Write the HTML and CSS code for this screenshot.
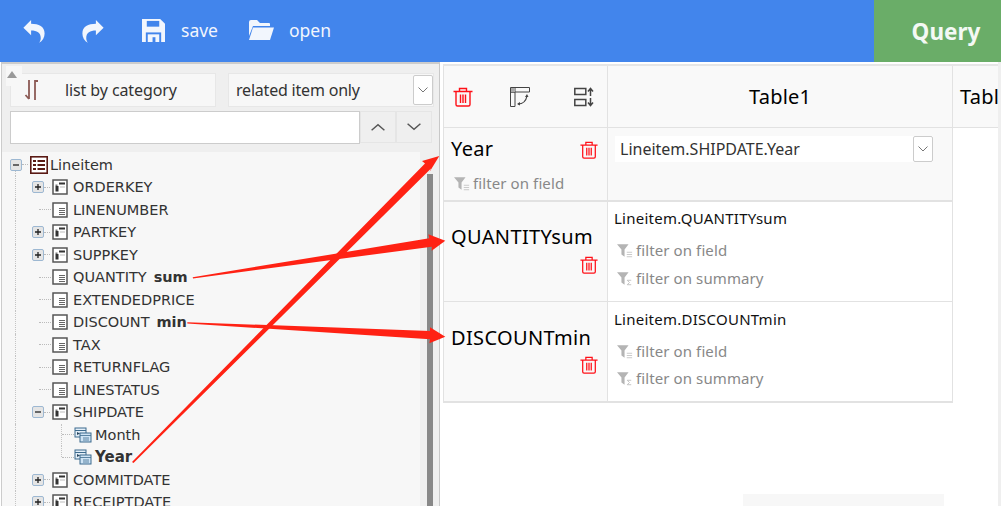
FILE: index.html
```html
<!DOCTYPE html>
<html lang="en">
<head>
<meta charset="utf-8">
<title>Query builder</title>
<link rel="stylesheet" href="styles.css">
</head>
<body>
<svg class="defs" width="0" height="0" aria-hidden="true">
  <symbol id="trash" viewBox="0 0 20 20"><path d="M.5 4.500h19M6.500 4.500V1.500h7v3M3 4.500v13a1.500 1.500 0 0 0 1.500 1.500h11a1.500 1.500 0 0 0 1.500-1.500v-13M7.500 7.500v8.500M10 7.500v8.500M12.500 7.500v8.500" fill="none" stroke="#ff1018" stroke-width="1.400"/></symbol>
  <symbol id="filter" viewBox="0 0 18 16"><path d="M0 1h13L8.500 7v8L5 12.500V7z" fill="#b4b4b4"/><path d="M11 10h6M11 12.500h6M11 15h6" stroke="#c4c4c4" stroke-width="1"/></symbol>
  <symbol id="filtersum" viewBox="0 0 18 16"><path d="M0 1h13L8.500 7v8L5 12.500V7z" fill="#b4b4b4"/><path d="M16 10h-4.500l2.500 2.500-2.500 2.500H16" fill="none" stroke="#bcbcbc" stroke-width="1"/></symbol>
  <symbol id="fold" viewBox="0 0 16 16"><rect x="1" y="1" width="14" height="14" fill="#fff" stroke="#555" stroke-width="1.500"/><rect x="7" y="3.500" width="6" height="2" fill="#333"/><rect x="3.500" y="7" width="3" height="5.500" fill="#333"/><rect x="3.500" y="5.500" width="2" height="1.500" fill="#777"/><path d="M8 8h5" stroke="#bbb"/></symbol>
  <symbol id="leaf" viewBox="0 0 16 16"><rect x="1" y="1" width="14" height="14" fill="#fff" stroke="#555" stroke-width="1.500"/><path d="M7 6.500h6M7 8.500h6M7 10.500h6M7 12.500h6" stroke="#666"/></symbol>
  <symbol id="level" viewBox="0 0 18 16"><rect x="1" y="1" width="11" height="9" fill="#e4eff8" stroke="#3d6b8e"/><path d="M1 3.500h11" stroke="#3d6b8e"/><rect x="6" y="6" width="11" height="9" fill="#cfe4f5" stroke="#3d6b8e"/><path d="M6 8.500h11M9 11h6M9 13h6" stroke="#3d6b8e" stroke-width=".8"/><path d="M3 5l3 1.500L3 8z" fill="#27465e"/></symbol>
  <symbol id="plus" viewBox="0 0 12 12"><rect x=".5" y=".5" width="11" height="11" rx="1.500" fill="#e5e5e5" stroke="#9db8d2"/><path d="M3 6h6M6 3v6" stroke="#222" stroke-width="1.300"/></symbol>
  <symbol id="minus" viewBox="0 0 12 12"><rect x=".5" y=".5" width="11" height="11" rx="1.500" fill="#e5e5e5" stroke="#9db8d2"/><path d="M3 6h6" stroke="#222" stroke-width="1.300"/></symbol>
  <symbol id="chev" viewBox="0 0 20 12"><path d="M2 10l8-7 8 7" fill="none" stroke="#555" stroke-width="1.800"/></symbol>
  <symbol id="tiny" viewBox="0 0 10 6"><path d="M.5.500l4.500 4.500 4.500-4.500" fill="none" stroke="#777" stroke-width="1"/></symbol>
</svg>

<header class="topbar">
  <div class="tools">
    <svg class="ico-arrow" viewBox="0 0 24 28"><path d="M9 2L1 10l8 8v-5c6 0 10 2 10 8 0 2-1 4-2 5 4-2 6-6 6-10 0-7-6-10-14-10z" fill="#f2f6fd"/></svg>
    <svg class="ico-arrow" viewBox="0 0 24 28"><path d="M15 2l8 8-8 8v-5C9 13 5 15 5 21c0 2 1 4 2 5-4-2-6-6-6-10C1 9 7 6 15 6z" fill="#f2f6fd"/></svg>
    <button class="tool save"><svg class="ico-save" viewBox="0 0 24 24"><path d="M0 0h19l5 5v19H0z" fill="#f2f6fd"/><path d="M5 2h13v6H5z" fill="#4285ec"/><path d="M4 14h16v10H4z" fill="#4285ec"/><path d="M6 16h12v8H6z" fill="#f2f6fd"/><path d="M11 19h3v5h-3z" fill="#4285ec"/></svg><span>save</span></button>
    <button class="tool open"><svg class="ico-open" viewBox="0 0 26 22"><path d="M1 3a2 2 0 0 1 2-2h6l3 3h9a1 1 0 0 1 1 1v2H5L1 17z" fill="#f2f6fd"/><path d="M5 8.500h21L22 21H1z" fill="#f2f6fd"/></svg><span>open</span></button>
  </div>
  <button class="query">Query</button>
</header>

<main class="main">
  <aside class="left">
    <i class="scroll-up"></i>
    <div class="filters">
      <div class="box by-cat">
        <svg class="ico-sort" viewBox="0 0 16 22"><path d="M5 1v19M1.500 16L5 20M11 21V2h3" fill="none" stroke="#8c5a55" stroke-width="1.800"/></svg>
        <span>list by category</span>
      </div>
      <div class="box related"><span>related item only</span><span class="dd"><svg class="tiny"><use href="#tiny"/></svg></span></div>
    </div>
    <div class="search">
      <div class="input"></div>
      <span class="step"><svg class="chev"><use href="#chev"/></svg></span>
      <span class="step"><svg class="chev flip"><use href="#chev"/></svg></span>
    </div>
    <div class="tree">
      <div class="row root"><svg class="tog"><use href="#minus"/></svg><i class="dash"></i><svg class="ico-root" viewBox="0 0 18 18"><rect x=".8" y=".8" width="16.400" height="16.400" fill="#fff" stroke="#5a1a14" stroke-width="1.600"/><path d="M3 4h3v2H3zM3 8h3v2H3zM3 12h3v2H3z" fill="#5a1a14"/><path d="M7.500 5h7.500M7.500 9h7.500M7.500 13h7.500" stroke="#5a1a14" stroke-width="1.800"/></svg><span>Lineitem</span></div>
      <div class="row l1"><svg class="tog"><use href="#plus"/></svg><i class="dash"></i><svg class="node"><use href="#fold"/></svg><span>ORDERKEY</span></div>
      <div class="row l1 noch"><i class="dash long"></i><svg class="node"><use href="#leaf"/></svg><span>LINENUMBER</span></div>
      <div class="row l1"><svg class="tog"><use href="#plus"/></svg><i class="dash"></i><svg class="node"><use href="#fold"/></svg><span>PARTKEY</span></div>
      <div class="row l1"><svg class="tog"><use href="#plus"/></svg><i class="dash"></i><svg class="node"><use href="#fold"/></svg><span>SUPPKEY</span></div>
      <div class="row l1 noch"><i class="dash long"></i><svg class="node"><use href="#leaf"/></svg><span>QUANTITY</span><b>sum</b></div>
      <div class="row l1 noch"><i class="dash long"></i><svg class="node"><use href="#leaf"/></svg><span>EXTENDEDPRICE</span></div>
      <div class="row l1 noch"><i class="dash long"></i><svg class="node"><use href="#leaf"/></svg><span>DISCOUNT</span><b>min</b></div>
      <div class="row l1 noch"><i class="dash long"></i><svg class="node"><use href="#leaf"/></svg><span>TAX</span></div>
      <div class="row l1 noch"><i class="dash long"></i><svg class="node"><use href="#leaf"/></svg><span>RETURNFLAG</span></div>
      <div class="row l1 noch"><i class="dash long"></i><svg class="node"><use href="#leaf"/></svg><span>LINESTATUS</span></div>
      <div class="row l1"><svg class="tog"><use href="#minus"/></svg><i class="dash"></i><svg class="node"><use href="#fold"/></svg><span>SHIPDATE</span></div>
      <div class="row l2"><i class="dash long"></i><svg class="node wide"><use href="#level"/></svg><span>Month</span></div>
      <div class="row l2 last"><i class="dash long"></i><svg class="node wide"><use href="#level"/></svg><span class="strong">Year</span></div>
      <div class="row l1"><svg class="tog"><use href="#plus"/></svg><i class="dash"></i><svg class="node"><use href="#fold"/></svg><span>COMMITDATE</span></div>
      <div class="row l1"><svg class="tog"><use href="#plus"/></svg><i class="dash"></i><svg class="node"><use href="#fold"/></svg><span>RECEIPTDATE</span></div>
    </div>
    <i class="scrollbar"></i>
  </aside>

  <section class="right">
    <div class="sheet">
      <div class="cell corner">
        <svg class="ico-trash big"><use href="#trash"/></svg>
        <svg class="ico-act mid" viewBox="0 0 20 20"><path d="M.5.500h19v4.500H.5zM.5 5h4.500v14.500H.5zM5 .5v4.500" fill="none" stroke="#444"/><rect x="1" y="1" width="4" height="4" fill="#aaa"/><path d="M8 17c5 0 8-3 9-8" fill="none" stroke="#444" stroke-width="1.200"/><path d="M17 7l-2 3h3.500zM7 17l3-2v3.500z" fill="#444"/></svg>
        <svg class="ico-act end-act" viewBox="0 0 20 20"><path d="M.8 1.500h11v6H.8zM.8 12.500h11v6H.8z" fill="none" stroke="#444" stroke-width="1.500"/><path d="M16.500 9V2M14 4.500l2.500-3 2.500 3M16.500 11v7M14 15.500l2.500 3 2.500-3" fill="none" stroke="#444" stroke-width="1.500"/></svg>
      </div>
      <div class="cell head">Table1</div>
      <div class="cell head next">Tabl</div>

      <div class="cell label year">
        <div class="label-top"><span class="name">Year</span><svg class="ico-trash"><use href="#trash"/></svg></div>
        <div class="flt"><svg class="ico-flt"><use href="#filter"/></svg>filter on field</div>
      </div>
      <div class="cell value shaded">
        <div class="pick"><span>Lineitem.SHIPDATE.Year</span><span class="dd"><svg class="tiny"><use href="#tiny"/></svg></span></div>
      </div>
      <div class="cell blank"></div>

      <div class="cell label qty">
        <span class="name">QUANTITYsum</span>
        <svg class="ico-trash below"><use href="#trash"/></svg>
      </div>
      <div class="cell value">
        <div class="field">Lineitem.QUANTITYsum</div>
        <div class="flt"><svg class="ico-flt"><use href="#filter"/></svg>filter on field</div>
        <div class="flt"><svg class="ico-flt"><use href="#filtersum"/></svg>filter on summary</div>
      </div>
      <div class="cell blank"></div>

      <div class="cell label qty end">
        <span class="name">DISCOUNTmin</span>
        <svg class="ico-trash below"><use href="#trash"/></svg>
      </div>
      <div class="cell value end">
        <div class="field">Lineitem.DISCOUNTmin</div>
        <div class="flt"><svg class="ico-flt"><use href="#filter"/></svg>filter on field</div>
        <div class="flt"><svg class="ico-flt"><use href="#filtersum"/></svg>filter on summary</div>
      </div>
      <div class="cell blank"></div>
    </div>
    <i class="ghost"></i>
  </section>
</main>

<svg class="arrows" viewBox="0 0 1001 506" aria-hidden="true">
  <path d="M132 462L425 163.500 422 161 439.300 156 429.500 172 431 168.500 133.500 463z"/>
  <path d="M192.700 277.200L429.300 238.300 428.300 234.300 445.300 240.700 431.700 250.700 431.700 246.700 193 278.500z"/>
  <path d="M187.300 322.200L430 331 430 327.300 445.300 336.700 429.300 343.300 430 339.300 187.300 323.500z"/>
</svg>
</body>
</html>
```
FILE: styles.css
```css
* { box-sizing: border-box; }
html, body { margin: 0; height: 506px; overflow: hidden; background: #fff; }
body { position: relative; font-family: "Noto Sans", "Liberation Sans", sans-serif; color: #333; }
.defs { position: absolute; }
i { display: block; }
button { border: 0; font: inherit; color: inherit; background: none; padding: 0; }

.topbar { height: 62px; background: #4285ec; display: flex; justify-content: space-between; }
.tools { display: flex; align-items: center; padding-left: 22px; }
.ico-arrow { width: 24px; height: 27px; margin-right: 35px; }
.ico-arrow + .ico-arrow { margin-right: 37px; }
.tool { display: flex; align-items: center; color: #f2f6fd; font-size: 17.500px; line-height: 24px; margin-top: -2px; }
.tool.save { margin-right: 30px; }
.tool span { margin-left: 16px; }
.tool.open span { margin-left: 15px; }
.ico-save { width: 23px; height: 23px; }
.ico-open { width: 26px; height: 22px; }
.query { width: 127px; background: #6aad68; color: #f4f9f4; font-size: 22.500px; font-weight: 700; padding-left: 17px; }

.main { display: flex; height: 444px; }
.left { position: relative; width: 439px; margin-left: 1px; flex: none; background: #efefef; border-top: 2px solid #ccc; border-left: 1px solid #ccc; border-right: 1px solid #c8c8c8; padding: 9px 5px 0 8px; overflow: hidden; }
.scroll-up { position: absolute; left: 4px; top: 2px; z-index: 2; width: 16px; height: 20px; background: #f7f7f7; }
.scroll-up::after { content: ""; position: absolute; left: 1px; top: 5px; border: 5px solid transparent; border-top: 0; border-bottom: 7px solid #999; }
.filters { display: flex; gap: 12px; position: relative; }
.box { height: 34px; background: #f7f7f7; border: 1px solid #e7e7e7; display: flex; align-items: center; font-size: 16px; }
.by-cat { width: 206px; letter-spacing: -.1px; }
.ico-sort { width: 16px; height: 22px; margin-left: 13px; }
.by-cat span { margin-left: 25px; }
.related { width: 206px; padding-left: 7px; justify-content: space-between; letter-spacing: -.2px; }
.dd { width: 20px; height: 30px; background: #fff; border: 1px solid #ccc; border-radius: 2px; display: flex; align-items: center; justify-content: center; }
.tiny { width: 10px; height: 6px; }
.search { display: flex; margin-top: 4px; height: 33px; }
.input { width: 350px; background: #fff; border: 1px solid #ccc; height: 33px; }
.step { width: 36px; height: 32px; background: #efefef; border: 1px solid #e5e5e5; display: flex; align-items: center; justify-content: center; }
.chev { width: 16px; height: 10px; }
.flip { transform: scaleY(-1); }

.tree { width: 418px; height: 360px; margin: 8px 0 0 -8px; background: #f7f7f7; padding-top: 1.500px; font-family: "DejaVu Sans", sans-serif; font-size: 14.500px; overflow: hidden; }
.row { height: 22.500px; display: flex; align-items: center; position: relative; white-space: nowrap; color: #333; }
.row::before { content: ""; position: absolute; top: 0; bottom: 0; border-left: 1px dotted #c4c4c4; }
.root { padding-left: 8px; }
.root::before { left: 13px; top: 14px; }
.l1 { padding-left: 30px; }
.l1::before { left: 13px; }
.l2 { padding-left: 60px; }
.l2::before { left: 13px; }
.l2::after { content: ""; position: absolute; left: 59px; top: 0; bottom: 0; border-left: 1px dotted #c4c4c4; }
.l2.last::after { bottom: 50%; }
.tog { width: 12px; height: 12px; flex: none; position: relative; z-index: 1; }
.dash { width: 6px; border-top: 1px dotted #bbb; flex: none; }
.dash.long { width: 12px; margin-left: 7px; }
.l2 .dash.long { margin-left: 0; width: 12px; }
.ico-root { width: 18px; height: 18px; margin: 0 2px 0 2px; flex: none; }
.node { width: 16px; height: 16px; margin: 0 5px 0 2px; flex: none; }
.noch .node { margin-left: 1px; }
.node.wide { width: 18px; margin: 0 3px 0 0; }
.row b { margin-left: 7px; font-size: 14.500px; font-weight: 700; }
.strong { font-size: 15px; font-weight: 700; }
.scrollbar { position: absolute; left: 425px; top: 110px; width: 6px; height: 340px; background: #888; }

.right { position: relative; flex: 1; padding: 2px 0 0 3px; border-right: 3px solid #efefef; overflow: hidden; }
.sheet { display: grid; grid-template-columns: 165px 345px 45px; grid-template-rows: 62px 74px 100px 101px; border-top: 2px solid #e6e6e6; }
.cell { border-right: 1px solid #e2e2e2; border-bottom: 1px solid #e2e2e2; }
.corner { background: #f9f9f9; border-left: 1px solid #e2e2e2; display: flex; align-items: center; padding: 0 0 0 9px; }
.head { background: #f9f9f9; color: #000; font-size: 20px; letter-spacing: .2px; display: flex; align-items: center; padding-left: 141px; }
.head.next { padding-left: 7px; overflow: hidden; border-right: 0; }
.ico-trash { width: 18px; height: 18px; flex: none; }
.ico-trash.big { width: 20px; height: 20px; }
.ico-act { width: 20px; height: 20px; }
.mid { margin-left: 37px; }
.end-act { margin-left: 44px; }
.label { background: #f9f9f9; border-left: 1px solid #e2e2e2; padding: 0 9px 0 7px; }
.name { color: #000; font-size: 20px; letter-spacing: .35px; line-height: 27px; }
.label-top { display: flex; justify-content: space-between; align-items: center; padding-top: 7px; }
.label-top .ico-trash { margin-top: 2px; }
.year { border-bottom: 2px solid #e2e2e2; }
.qty { display: flex; flex-direction: column; padding-top: 21px; }
.qty.end { padding-top: 22px; }
.below { align-self: flex-end; margin-top: 6px; }
.qty.end .below { margin-top: 5px; }
.flt { display: flex; align-items: center; font-size: 15px; letter-spacing: .1px; color: #888; line-height: 20px; }
.year .flt { margin: 11px 0 0 3px; }
.ico-flt { width: 16px; height: 15px; margin-right: 3px; }
.value { padding: 0 0 0 6px; }
.shaded { background: #f9f9f9; border-bottom: 2px solid #e2e2e2; padding-top: 8px; }
.pick { display: flex; justify-content: space-between; align-items: center; height: 26px; background: #fff; width: 318px; margin-left: 1px; padding-left: 5px; font-size: 16px; }
.pick .dd { height: 26px; }
.field { font-size: 15px; letter-spacing: .25px; color: #111; line-height: 20px; padding-top: 6px; margin-bottom: 12px; }
.end .field { padding-top: 7px; }
.value .flt { margin: 0 0 8px 3px; }
.value.end .flt { margin-bottom: 7px; }
.end { border-bottom-width: 2px; }
.blank { border: 0; }
.ghost { position: absolute; left: 303px; top: 432px; width: 201px; height: 14px; background: #f7f7f7; }

.arrows { position: absolute; left: 0; top: 0; width: 1001px; height: 506px; pointer-events: none; }
.arrows path { fill: #ff2214; }
```
